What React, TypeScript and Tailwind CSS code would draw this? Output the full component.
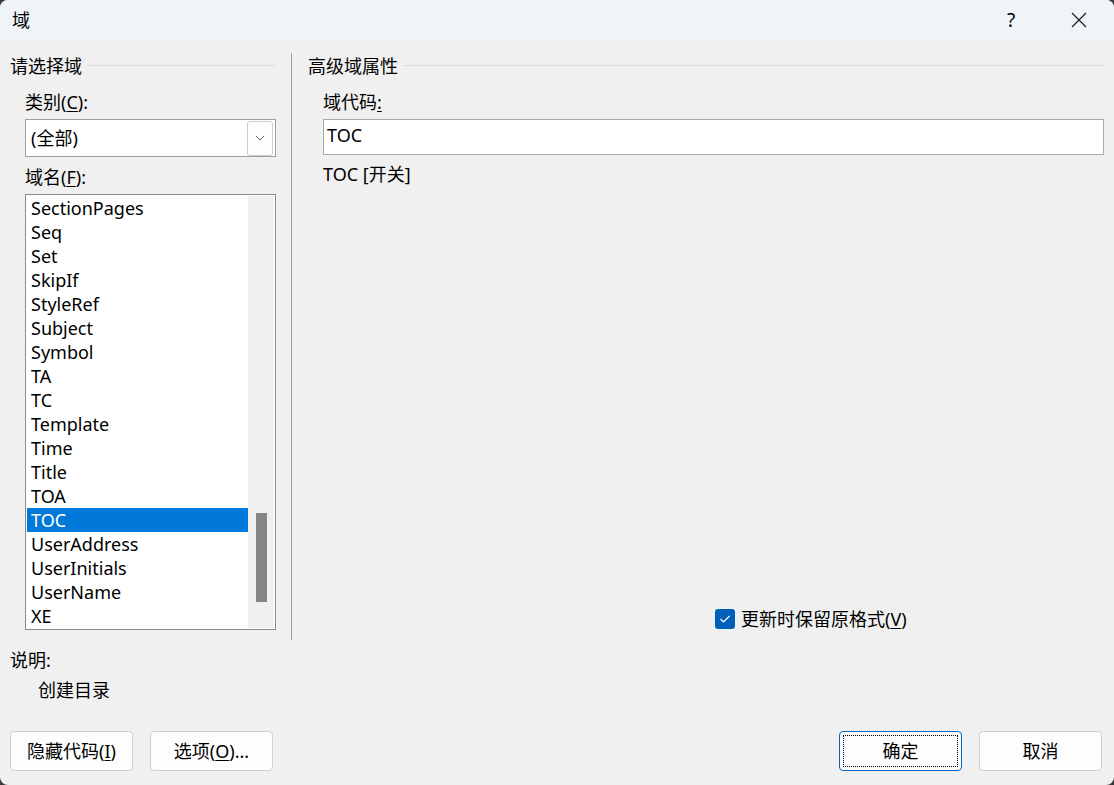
import React from "react";

const fields = [
  "SectionPages",
  "Seq",
  "Set",
  "SkipIf",
  "StyleRef",
  "Subject",
  "Symbol",
  "TA",
  "TC",
  "Template",
  "Time",
  "Title",
  "TOA",
  "TOC",
  "UserAddress",
  "UserInitials",
  "UserName",
  "XE",
];

function GroupHeader({ title }: { title: string }) {
  return (
    <div className="flex items-center h-6">
      <span>{title}</span>
      <div className="flex-1 h-px bg-[#dddddd] ml-[5px] mt-[-1px]" />
    </div>
  );
}

function Button({
  children,
  primary = false,
}: {
  children: React.ReactNode;
  primary?: boolean;
}) {
  return (
    <div
      className={
        primary
          ? "w-[123px] h-[40px] rounded-[4px] border border-[#0067c0] bg-[#fdfdfd] p-[3px]"
          : "w-[123px] h-[40px] rounded-[4px] border border-[#d0d0d0] bg-[#fdfdfd] p-[3px]"
      }
    >
      <div
        className={
          primary
            ? "h-full flex items-center justify-center border border-dotted border-black"
            : "h-full flex items-center justify-center"
        }
      >
        {children}
      </div>
    </div>
  );
}

export default function App() {
  return (
    <div
      className="w-[1114px] h-[785px] bg-[#3a3a3a] text-[18px] text-black leading-6"
      style={{ fontFamily: '"Noto Sans", "Noto Sans CJK SC", sans-serif' }}
    >
      <div className="w-full h-full rounded-[8px] overflow-hidden bg-[#f0f0f0] flex flex-col">
        {/* title bar */}
        <div className="h-[40px] bg-[#eff4f9] flex items-center pl-[12px]">
          <span className="flex-1">域</span>
          <span className="w-[20px] text-center mr-[50px] text-[19px]">?</span>
          <svg width="16" height="16" viewBox="0 0 16 16" className="mr-[27px]">
            <path d="M1 1 L15 15 M15 1 L1 15" stroke="#1a1a1a" strokeWidth="1.2" />
          </svg>
        </div>

        {/* main */}
        <div className="flex h-[600px]">
          {/* left column */}
          <div className="w-[291px] flex flex-col pl-[10px] pr-[15px] pt-[14px]">
            <GroupHeader title="请选择域" />
            <div className="pl-[15px] flex flex-col">
              <div className="mt-[12px] h-6">
                类别(<span className="underline underline-offset-2">C</span>):
              </div>
              <div className="mt-[5px] h-[38px] border border-[#a0a0a0] bg-white flex items-center">
                <span className="flex-1 pl-[5px]">(全部)</span>
                <div className="w-[26px] h-[35px] mr-[2px] border border-[#cccccc] rounded-[3px] bg-[#fdfdfd] flex items-center justify-center">
                  <svg width="10" height="6" viewBox="0 0 10 6">
                    <path d="M1 1 L5 5 L9 1" fill="none" stroke="#606060" strokeWidth="1" />
                  </svg>
                </div>
              </div>
              <div className="mt-[8px] h-6">
                域名(<span className="underline underline-offset-2">F</span>):
              </div>
              <div className="mt-[5px] h-[436px] border border-[#8a8a8a] bg-white flex p-px">
                <div className="flex-1 flex flex-col">
                  {fields.map((f) => (
                    <div
                      key={f}
                      className={
                        f === "TOC"
                          ? "h-6 shrink-0 pl-[4px] bg-[#0078d7] text-white"
                          : "h-6 shrink-0 pl-[4px]"
                      }
                    >
                      {f}
                    </div>
                  ))}
                </div>
                <div className="w-[26px] bg-[#f0f0f0] flex justify-center">
                  <div className="w-[11px] h-[89px] mt-[317px] bg-[#858585]" />
                </div>
              </div>
            </div>
          </div>

          <div className="w-px bg-[#a0a0a0] mt-[13px]" />

          {/* right column */}
          <div className="flex-1 flex flex-col pl-[16px] pr-[10px] pt-[14px]">
            <GroupHeader title="高级域属性" />
            <div className="pl-[15px] flex flex-col flex-1">
              <div className="mt-[12px] h-6">
                域代码<span className="underline underline-offset-2">:</span>
              </div>
              <div className="mt-[5px] h-[36px] border border-[#a8a8a8] bg-white flex items-center pl-[3px] pb-[5px]">
                TOC
              </div>
              <div className="mt-[7px] h-6">TOC [开关]</div>
              <div className="mt-auto mb-[9px] ml-[392px] h-6 flex items-center">
                <div className="w-[20px] h-[20px] rounded-[3px] bg-[#005fb8] flex items-center justify-center">
                  <svg width="12" height="10" viewBox="0 0 12 10">
                    <path d="M1.5 5 L4.5 8 L10.5 2" fill="none" stroke="white" strokeWidth="1.2" />
                  </svg>
                </div>
                <span className="ml-[6px]">
                  更新时保留原格式(<span className="underline underline-offset-2">V</span>)
                </span>
              </div>
            </div>
          </div>
        </div>

        {/* bottom */}
        <div className="flex flex-col pl-[10px] pr-[12px] pt-[8px]">
          <div className="h-6">说明:</div>
          <div className="h-6 mt-[6px] pl-[28px]">创建目录</div>
          <div className="mt-[29px] flex gap-[17px]">
            <Button>
              <span>
                隐藏代码(<span className="underline underline-offset-2">I</span>)
              </span>
            </Button>
            <Button>
              <span>
                选项(<span className="underline underline-offset-2">O</span>)...
              </span>
            </Button>
            <div className="flex-1" />
            <Button primary>确定</Button>
            <Button>取消</Button>
          </div>
        </div>
      </div>
    </div>
  );
}
